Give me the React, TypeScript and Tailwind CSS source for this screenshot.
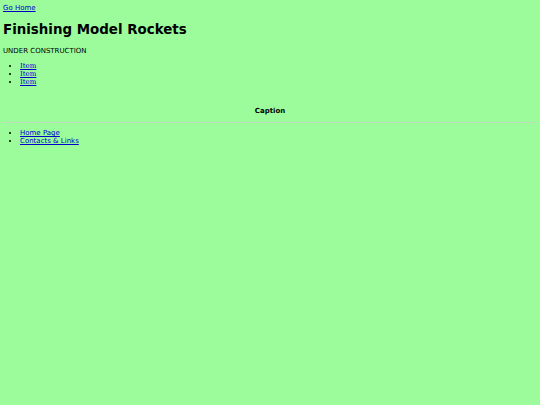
export default function App() {
  return (
    <div className="min-h-[405px] bg-[#9cfc9c] px-[3px] pt-[4px] text-[7px] leading-[8px] text-black" style={{ fontFamily: '"DejaVu Sans", Verdana, sans-serif' }}>
      <a href="#" className="block w-fit text-[#0000cc] underline">Go Home</a>
      <h1 className="mt-[10px] text-[13.4px] font-bold leading-[16px]">Finishing Model Rockets</h1>
      <p className="mt-[9px]">UNDER CONSTRUCTION</p>
      <ul className="mt-[7px] list-disc pl-[17px] marker:text-[6px]" style={{ fontFamily: '"DejaVu Serif", serif' }}>
        <li><a href="#" className="text-[#0000cc] underline">Item</a></li>
        <li><a href="#" className="text-[#0000cc] underline">Item</a></li>
        <li><a href="#" className="text-[#0000cc] underline">Item</a></li>
      </ul>
      <p className="mt-[21px] text-center font-bold">Caption</p>
      <hr className="mt-[7px] border-t border-[#bcdcbc]" />
      <ul className="mt-[6px] list-disc pl-[17px] marker:text-[6px]">
        <li><a href="#" className="text-[#0000cc] underline">Home Page</a></li>
        <li><a href="#" className="text-[#0000cc] underline">Contacts &amp; Links</a></li>
      </ul>
    </div>
  );
}
